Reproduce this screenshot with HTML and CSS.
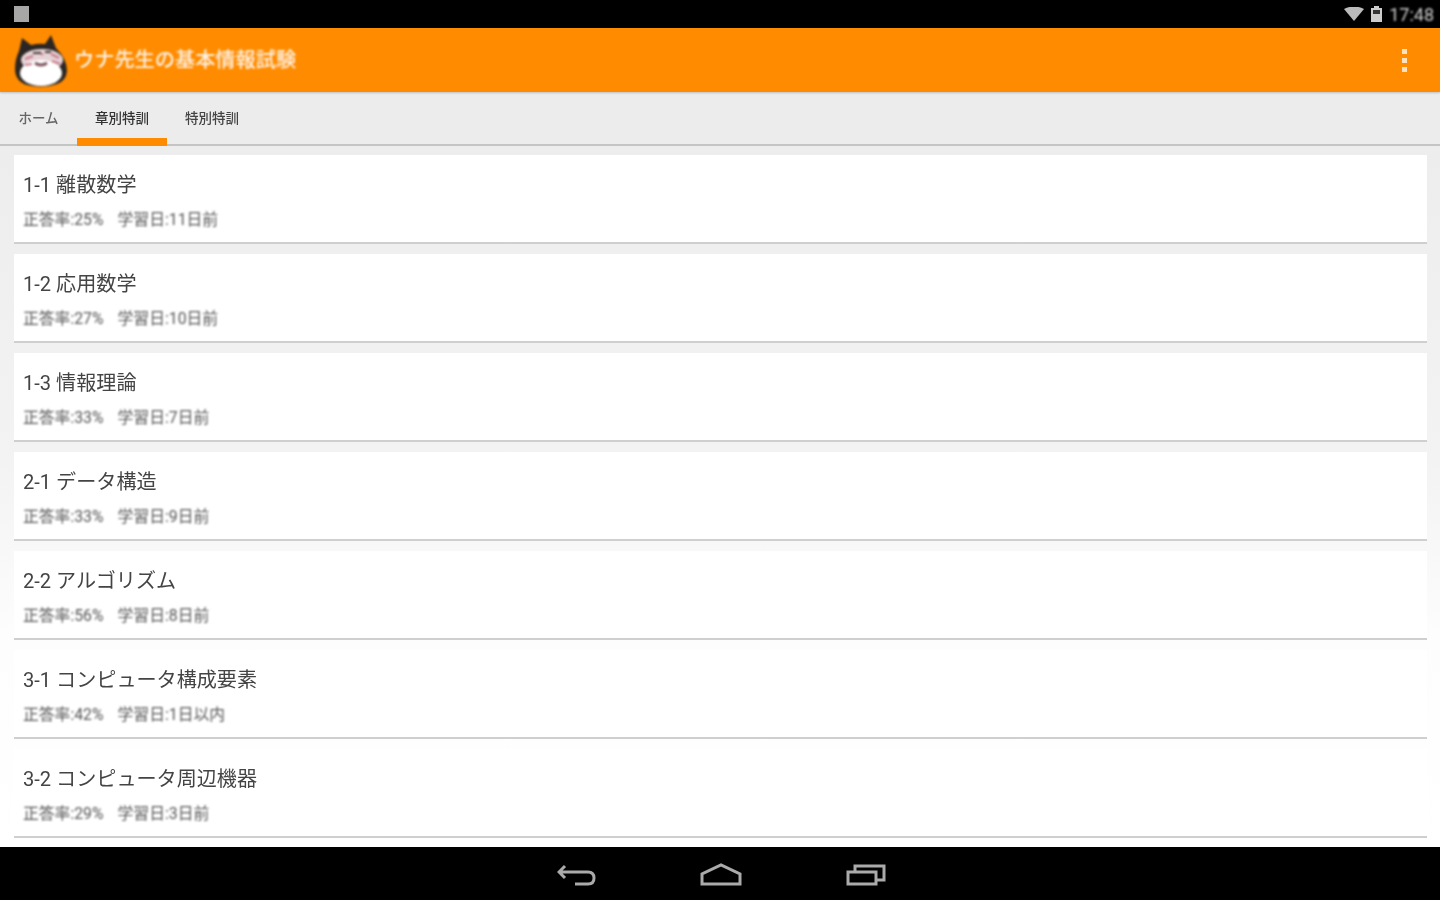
FILE: index.html
```html
<!DOCTYPE html>
<html lang="ja">

<head>
    <meta charset="UTF-8">
    <title>ウナ先生の基本情報試験</title>
    <link rel="stylesheet" href="styles.css">
</head>

<body>
    <div class="screen">
        <!-- status bar -->
        <div class="status">
            <div class="notify"></div>
            <div class="status_right">
                <svg class="wifi" width="20" height="14" viewBox="0 0 20 14"><path d="M0 2 Q10 -3 20 2 L10 14Z" fill="#bbb"/></svg>
                <svg class="batt" width="11" height="16" viewBox="0 0 11 16"><path d="M3 0h5v2h3v14H0V2h3z" fill="#ccc"/><rect x="2" y="4" width="7" height="4" fill="#333"/></svg>
                <span class="clock">17:48</span>
            </div>
        </div>

        <!-- action bar -->
        <div class="toolbar">
            <svg class="logo" width="56" height="54" viewBox="0 0 56 54">
                <path d="M6 16 L9 3 L18 10 Q26 8 32 9 L38 0 L43 13 Q54 24 54 36 Q53 46 44 49 Q30 54 14 50 Q2 46 2 34 Q2 24 6 16Z" fill="#2b2623"/>
                <ellipse cx="29" cy="25" rx="21" ry="11" fill="#e6d3d6"/>
                <ellipse cx="28" cy="38" rx="21" ry="13" fill="#fff"/>
                <path d="M12 24l8-3M12 30l7-1M38 19l8 4M39 26l8 3M26 17l4 3" stroke="#c9788a" stroke-width="2" fill="none"/>
                <path d="M20 18h8M32 17h6" stroke="#4a3f3f" stroke-width="2" fill="none"/>
                <path d="M22 28 q6 4 12 0" stroke="#7d565c" stroke-width="3" fill="none"/>
            </svg>
            <div class="app_title">ウナ先生の基本情報試験</div>
            <div class="menu"><i></i><i></i><i></i></div>
        </div>

        <!-- tabs -->
        <div class="tabs">
            <div class="tab tab_home"><span>ホーム</span></div>
            <div class="tab tab_on"><span>章別特訓</span></div>
            <div class="tab"><span>特別特訓</span></div>
        </div>

        <!-- list -->
        <div class="list">
            <div class="item">
                <div class="name">1-1 離散数学</div>
                <div class="info"><span>正答率:25%</span><span>学習日:11日前</span></div>
            </div>
            <div class="item">
                <div class="name">1-2 応用数学</div>
                <div class="info"><span>正答率:27%</span><span>学習日:10日前</span></div>
            </div>
            <div class="item">
                <div class="name">1-3 情報理論</div>
                <div class="info"><span>正答率:33%</span><span>学習日:7日前</span></div>
            </div>
            <div class="item">
                <div class="name">2-1 データ構造</div>
                <div class="info"><span>正答率:33%</span><span>学習日:9日前</span></div>
            </div>
            <div class="item">
                <div class="name">2-2 アルゴリズム</div>
                <div class="info"><span>正答率:56%</span><span>学習日:8日前</span></div>
            </div>
            <div class="item">
                <div class="name">3-1 コンピュータ構成要素</div>
                <div class="info"><span>正答率:42%</span><span>学習日:1日以内</span></div>
            </div>
            <div class="item">
                <div class="name">3-2 コンピュータ周辺機器</div>
                <div class="info"><span>正答率:29%</span><span>学習日:3日前</span></div>
            </div>
        </div>

        <!-- navigation bar -->
        <div class="nav">
            <svg width="40" height="26" viewBox="0 0 40 26"><path d="M8 4 L2 10 L8 16 M3 10 H31 Q37 10 37 16 Q37 22 31 22 H18" stroke="#aaa" stroke-width="3" fill="none"/></svg>
            <svg width="42" height="24" viewBox="0 0 42 24"><path d="M2 21 V11 L21 2 L40 11 V21Z" stroke="#aaa" stroke-width="3" fill="none"/></svg>
            <svg width="42" height="24" viewBox="0 0 42 24"><path d="M3 9 H31 V21 H3Z M10 8 V3 H39 V17 H32" stroke="#aaa" stroke-width="3" fill="none"/></svg>
        </div>
    </div>
</body>

</html>
```

FILE: styles.css
```css
* {
    box-sizing: border-box;
}

body {
    margin: 0;
    font-family: "Roboto", "Noto Sans CJK JP", sans-serif;
}

.screen {
    width: 1440px;
    height: 900px;
    display: flex;
    flex-direction: column;
    overflow: hidden;
    background: #fff;
}

.status {
    height: 28px;
    background: #000;
    display: flex;
    justify-content: space-between;
    align-items: center;
    padding: 0 6px 0 14px;
}

.notify {
    width: 15px;
    height: 16px;
    background: #a6a6a6;
    filter: blur(0.7px);
}

.status_right {
    display: flex;
    align-items: center;
    gap: 7px;
}

.clock {
    color: #ccc;
    font-size: 18px;
    filter: blur(0.8px);
}

.wifi,
.batt {
    filter: blur(0.7px);
}

.toolbar {
    height: 64px;
    background: #ff8c00;
    display: flex;
    align-items: center;
    padding: 0 33px 0 13px;
    box-shadow: 0 1px 2px rgba(0, 0, 0, 0.2);
    position: relative;
}

.logo {
    flex: none;
    margin-top: 4px;
    filter: blur(0.8px);
}

.app_title {
    color: #fff3e6;
    font-size: 20.2px;
    font-weight: 500;
    line-height: 64px;
    height: 64px;
    margin-left: 5px;
    flex: 1;
    white-space: nowrap;
    filter: blur(0.8px);
}

.menu {
    display: flex;
    flex-direction: column;
    gap: 4px;
    filter: blur(0.5px);
}

.menu i {
    display: block;
    width: 5px;
    height: 5px;
    background: #ffe0bd;
}

.tabs {
    height: 54px;
    background: #ececec;
    border-bottom: 2px solid #c4c4c4;
    display: flex;
}

.tab {
    width: 90px;
    height: 54px;
    font-size: 13.5px;
    font-weight: 500;
    line-height: 53px;
    color: #444;
    text-align: center;
}

.tab span {
    display: block;
    filter: blur(0.7px);
}

.tab_home {
    width: 77px;
    color: #666;
}

.tab_on {
    color: #333;
    position: relative;
}

.tab_on::after {
    content: "";
    position: absolute;
    left: 0;
    right: 0;
    bottom: 0;
    height: 8px;
    background: #ff8c00;
}

.list {
    flex: 1;
    display: flex;
    flex-direction: column;
    gap: 10px;
    padding: 9px 13px 0 14px;
    overflow: hidden;
    background: linear-gradient(#ededed, #f3f3f3 45%, #fdfdfd 70%, #fff);
}

.item {
    height: 89px;
    flex: none;
    background: #fff;
    border-bottom: 2px solid #cfcfcf;
    padding: 16px 9px 0;
}

.name {
    font-size: 20.1px;
    line-height: 28px;
    color: #444;
    filter: blur(0.7px);
}

.info {
    display: flex;
    gap: 14px;
    margin-top: 11px;
    font-size: 15.8px;
    line-height: 20px;
    color: #555;
    filter: blur(0.8px);
}

.nav {
    height: 53px;
    flex: none;
    background: #000;
    display: flex;
    justify-content: center;
    align-items: center;
    gap: 103px;
    padding: 3px 0 0 3px;
}

.nav svg {
    filter: blur(0.7px);
}
```
